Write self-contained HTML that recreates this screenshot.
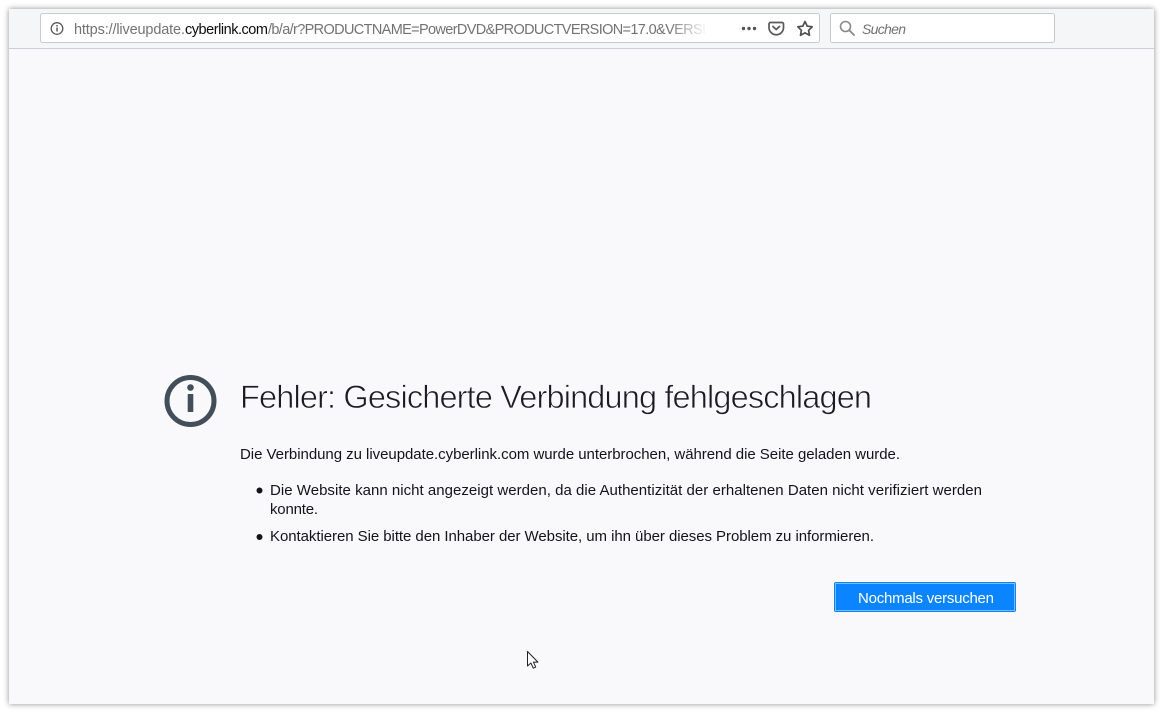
<!DOCTYPE html>
<html lang="de">
<head>
<meta charset="utf-8">
<title>Fehler: Gesicherte Verbindung fehlgeschlagen</title>
<style>
html,body{margin:0;padding:0;width:1162px;height:712px;overflow:hidden;background:#fff}
svg{display:block;position:absolute;left:0;top:0}
text{font-family:"Liberation Sans",sans-serif}
</style>
</head>
<body>
<svg width="1162" height="712" viewBox="0 0 1162 712" xmlns="http://www.w3.org/2000/svg">
<defs>
<filter id="sh" x="-3%" y="-3%" width="106%" height="106%"><feGaussianBlur stdDeviation="3"/></filter>
<linearGradient id="fade" x1="0" x2="1" y1="0" y2="0"><stop offset="0" stop-color="#fff" stop-opacity="0"/><stop offset="1" stop-color="#fff"/></linearGradient>
</defs>
<rect x="9" y="9" width="1145" height="695" fill="#666" opacity=".75" filter="url(#sh)"/>
<rect x="9" y="9" width="1145" height="695" fill="#f9f9fb"/>
<rect x="9" y="9" width="1145" height="39" fill="#f5f6f7"/>
<rect x="9" y="48" width="1145" height="1" fill="#ccced1"/>

<rect x="40.500" y="13.500" width="779" height="29" rx="2" fill="#fff" stroke="#c9cacc"/>
<circle cx="57" cy="28.500" r="5.800" fill="none" stroke="#5a5a5c" stroke-width="1.300"/>
<rect x="56.300" y="27.500" width="1.500" height="4" fill="#5a5a5c"/>
<rect x="56.300" y="25" width="1.500" height="1.500" fill="#5a5a5c"/>
<text x="74" y="34" font-size="14.500" fill="#737373" textLength="111" lengthAdjust="spacing">https://liveupdate.</text>
<text x="185" y="34" font-size="14.500" fill="#0c0c0d" textLength="83" lengthAdjust="spacing">cyberlink.com</text>
<text x="268" y="34" font-size="14.500" fill="#737373" textLength="438" lengthAdjust="spacing">/b/a/r?PRODUCTNAME=PowerDVD&amp;PRODUCTVERSION=17.0&amp;VERSI</text>
<rect x="668" y="15" width="40" height="26" fill="url(#fade)"/>
<circle cx="743.500" cy="28.500" r="1.700" fill="#555"/><circle cx="749" cy="28.500" r="1.700" fill="#555"/><circle cx="754.500" cy="28.500" r="1.700" fill="#555"/>
<path d="M770.500 22.500h11.500a1.500 1.500 0 0 1 1.500 1.500v3.500a7.200 7.200 0 0 1-14.500 0v-3.500a1.500 1.500 0 0 1 1.500-1.500z" fill="none" stroke="#58585a" stroke-width="1.700"/>
<path d="M773 26.500l3.200 3 3.200-3" fill="none" stroke="#58585a" stroke-width="1.800" stroke-linecap="round" stroke-linejoin="round"/>
<path d="M805 21.500l2.200 4.600 5 .7-3.600 3.500.9 5-4.500-2.400-4.500 2.400.9-5-3.600-3.500 5-.7z" fill="none" stroke="#505052" stroke-width="1.700" stroke-linejoin="round"/>

<rect x="830.500" y="13.500" width="224" height="29" rx="2" fill="#fff" stroke="#c9cacc"/>
<circle cx="845.500" cy="26.500" r="5" fill="none" stroke="#8a8a8c" stroke-width="1.600"/>
<path d="M849.300 30.300l4.700 4.700" stroke="#8a8a8c" stroke-width="1.900" stroke-linecap="round"/>
<text x="862" y="34" font-size="14" font-style="italic" fill="#737373" textLength="44" lengthAdjust="spacing">Suchen</text>

<circle cx="190.500" cy="401" r="23.500" fill="none" stroke="#424e5a" stroke-width="5"/>
<circle cx="190.500" cy="387.500" r="3.300" fill="#424e5a"/>
<rect x="187.700" y="394" width="5.600" height="18" rx=".6" fill="#424e5a"/>

<text x="240" y="408" font-size="32.500" fill="#1c1c20" stroke="#f9f9fb" stroke-width=".7" textLength="632" lengthAdjust="spacing">Fehler: Gesicherte Verbindung fehlgeschlagen</text>

<text x="240" y="459" font-size="15" fill="#141418" textLength="660" lengthAdjust="spacing">Die Verbindung zu liveupdate.cyberlink.com wurde unterbrochen, während die Seite geladen wurde.</text>
<circle cx="259.500" cy="490.500" r="3" fill="#141418"/>
<text x="270" y="495" font-size="15" fill="#141418" textLength="712" lengthAdjust="spacing">Die Website kann nicht angezeigt werden, da die Authentizität der erhaltenen Daten nicht verifiziert werden</text>
<text x="270" y="514" font-size="15" fill="#141418" textLength="48" lengthAdjust="spacing">konnte.</text>
<circle cx="259.500" cy="537" r="3" fill="#141418"/>
<text x="270" y="541" font-size="15" fill="#141418" textLength="604" lengthAdjust="spacing">Kontaktieren Sie bitte den Inhaber der Website, um ihn über dieses Problem zu informieren.</text>

<rect x="834" y="582" width="182" height="30" rx="2" fill="#0a84ff"/>
<rect x="835.500" y="583.500" width="179" height="27" fill="none" stroke="#e6f2ff" stroke-width="1" stroke-dasharray="1 1"/>
<text x="858" y="603" font-size="15" fill="#fff" textLength="136" lengthAdjust="spacing">Nochmals versuchen</text>

<path d="M527.500 651.500v14.500l3.400-3 2.400 5.200 2.400-1.100-2.300-5h4.500z" fill="#fff" stroke="#222" stroke-width="1" stroke-linejoin="round"/>
</svg>
</body>
</html>
